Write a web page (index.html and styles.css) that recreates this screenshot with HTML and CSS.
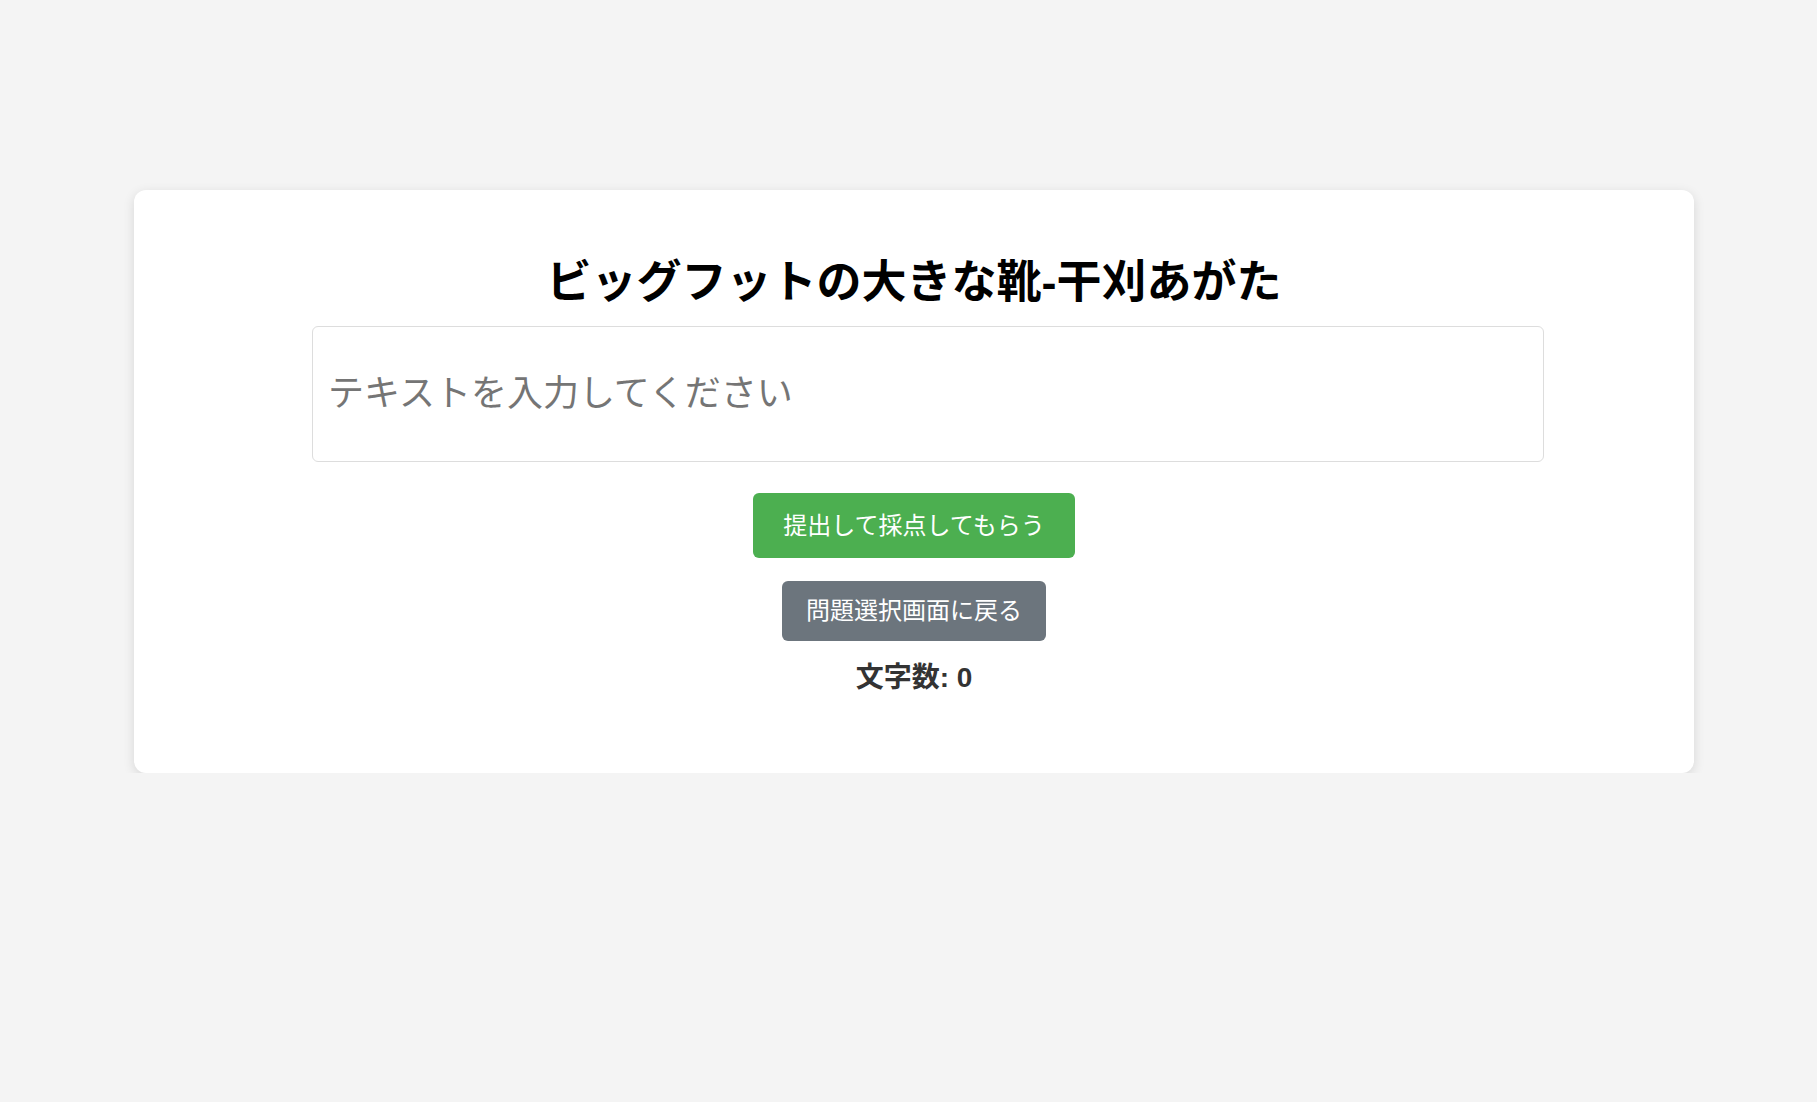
FILE: index.html
```html
<!DOCTYPE html>
<html lang="ja">
<head>
<meta charset="utf-8">
<title>ビッグフットの大きな靴-干刈あがた</title>
<link rel="stylesheet" href="styles.css">
</head>
<body>
<div class="page">
  <main class="card">
    <h1 class="title">ビッグフットの大きな靴-干刈あがた</h1>
    <input class="answer" type="text" placeholder="テキストを入力してください">
    <div class="actions">
      <button class="btn btn-submit" type="button">提出して採点してもらう</button>
      <button class="btn btn-back" type="button">問題選択画面に戻る</button>
    </div>
    <p class="count">文字数: 0</p>
  </main>
</div>
</body>
</html>
```

FILE: styles.css
```css
html, body {
  margin: 0;
  padding: 0;
}
body {
  background: #f4f4f4;
  font-family: "Liberation Sans", "Noto Sans CJK JP", sans-serif;
}
.page {
  padding: 190px 123px 0 134px;
}
.card {
  background: #fff;
  border-radius: 12px;
  box-shadow: 0 3px 12px rgba(0, 0, 0, 0.12);
  height: 583px;
  box-sizing: border-box;
  padding-top: 58px;
  display: flex;
  flex-direction: column;
}
.title {
  margin: 0 0 8px;
  font-size: 45px;
  font-weight: bold;
  color: #000;
  text-align: center;
  line-height: 70px;
}
.answer {
  display: block;
  box-sizing: border-box;
  margin: 0 150px 0 178px;
  width: 1232px;
  height: 136px;
  padding: 0 15px;
  border: 1px solid #ddd;
  border-radius: 6px;
  font-family: "Liberation Sans", "Noto Sans CJK JP", sans-serif;
  font-size: 36px;
  color: #333;
  background: #fff;
  outline: none;
}
.answer::placeholder {
  color: #757575;
}
.actions {
  margin-top: 31px;
  display: flex;
  flex-direction: column;
  align-items: center;
  gap: 23px;
}
.btn {
  border: none;
  color: #fff;
  font-family: "Liberation Sans", "Noto Sans CJK JP", sans-serif;
  font-size: 24px;
  line-height: 35px;
  border-radius: 6px;
  cursor: pointer;
}
.btn-submit {
  background: #4caf50;
  padding: 15px 30px;
}
.btn-back {
  background: #6c757d;
  padding: 12px 24px 13px;
}
.count {
  margin: 16px 0 0;
  text-align: center;
  font-size: 28px;
  font-weight: bold;
  line-height: 41px;
  color: #333;
}
```
